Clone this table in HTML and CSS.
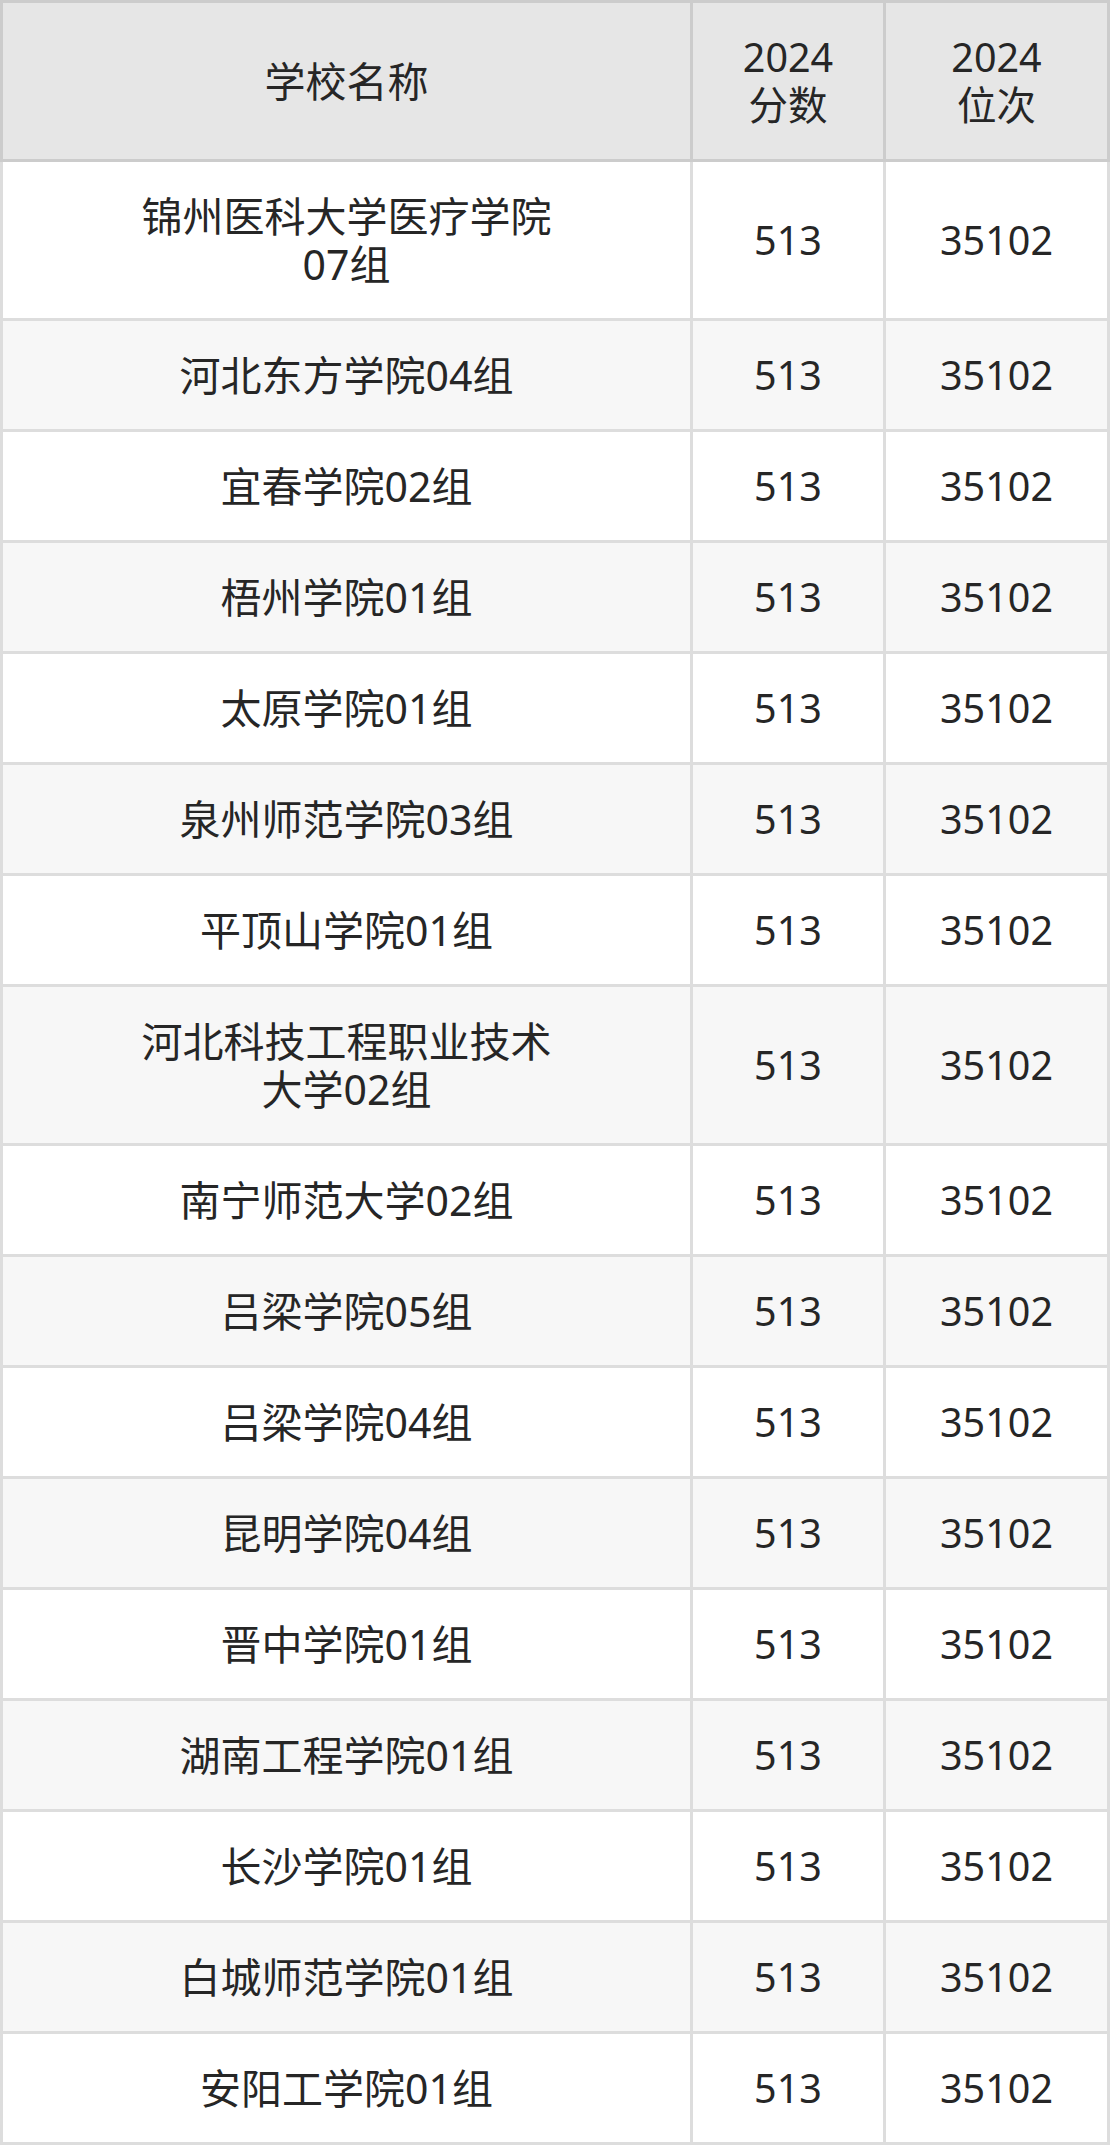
FILE: index.html
```html
<!DOCTYPE html>
<html lang="zh-CN">
<head>
<meta charset="utf-8">
<title>2024分数位次</title>
<link rel="stylesheet" href="styles.css">
</head>
<body>
<table class="score-table">
  <thead>
    <tr>
      <th class="col-name">学校名称</th>
      <th class="col-score num">2024<br>分数</th>
      <th class="col-rank num">2024<br>位次</th>
    </tr>
  </thead>
  <tbody>
    <tr><td class="col-name"><div class="name">锦州医科大学医疗学院07组</div></td><td class="num">513</td><td class="num">35102</td></tr>
    <tr><td class="col-name"><div class="name">河北东方学院04组</div></td><td class="num">513</td><td class="num">35102</td></tr>
    <tr><td class="col-name"><div class="name">宜春学院02组</div></td><td class="num">513</td><td class="num">35102</td></tr>
    <tr><td class="col-name"><div class="name">梧州学院01组</div></td><td class="num">513</td><td class="num">35102</td></tr>
    <tr><td class="col-name"><div class="name">太原学院01组</div></td><td class="num">513</td><td class="num">35102</td></tr>
    <tr><td class="col-name"><div class="name">泉州师范学院03组</div></td><td class="num">513</td><td class="num">35102</td></tr>
    <tr><td class="col-name"><div class="name">平顶山学院01组</div></td><td class="num">513</td><td class="num">35102</td></tr>
    <tr><td class="col-name"><div class="name">河北科技工程职业技术大学02组</div></td><td class="num">513</td><td class="num">35102</td></tr>
    <tr><td class="col-name"><div class="name">南宁师范大学02组</div></td><td class="num">513</td><td class="num">35102</td></tr>
    <tr><td class="col-name"><div class="name">吕梁学院05组</div></td><td class="num">513</td><td class="num">35102</td></tr>
    <tr><td class="col-name"><div class="name">吕梁学院04组</div></td><td class="num">513</td><td class="num">35102</td></tr>
    <tr><td class="col-name"><div class="name">昆明学院04组</div></td><td class="num">513</td><td class="num">35102</td></tr>
    <tr><td class="col-name"><div class="name">晋中学院01组</div></td><td class="num">513</td><td class="num">35102</td></tr>
    <tr><td class="col-name"><div class="name">湖南工程学院01组</div></td><td class="num">513</td><td class="num">35102</td></tr>
    <tr><td class="col-name"><div class="name">长沙学院01组</div></td><td class="num">513</td><td class="num">35102</td></tr>
    <tr><td class="col-name"><div class="name">白城师范学院01组</div></td><td class="num">513</td><td class="num">35102</td></tr>
    <tr><td class="col-name"><div class="name">安阳工学院01组</div></td><td class="num">513</td><td class="num">35102</td></tr>
  </tbody>
</table>
</body>
</html>
```
FILE: styles.css
```css
html, body {
  margin: 0;
  padding: 0;
  background: #ffffff;
}

body {
  font-family: "Noto Sans", "Noto Sans CJK SC", sans-serif;
  color: #262626;
}

.score-table {
  width: 1110px;
  border-collapse: collapse;
  table-layout: fixed;
  font-size: 41px;
  line-height: 48px;
}

.score-table th,
.score-table td {
  padding: 30px 0;
  text-align: center;
  vertical-align: middle;
  font-weight: normal;
}

.score-table th {
  background: #e6e6e6;
  border: 3px solid #cccccc;
}

.score-table td {
  border: 3px solid #dddddd;
}

.score-table tbody tr:nth-child(odd) td {
  background: #ffffff;
}

.score-table tbody tr:nth-child(even) td {
  background: #f7f7f7;
}

.score-table .num {
  font-size: 39.5px;
}

.col-name {
  width: 687px;
}

.col-score {
  width: 190px;
}

.col-rank {
  width: 221px;
}

.name {
  max-width: 430px;
  margin: 0 auto;
}
```
